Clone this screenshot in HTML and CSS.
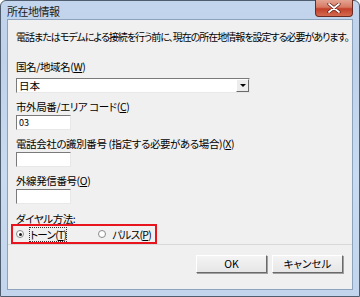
FILE: index.html
```html
<!DOCTYPE html>
<html lang="ja">
<head>
    <meta charset="UTF-8">
    <title>所在地情報</title>
    <link rel="stylesheet" href="styles.css">
</head>
<body>
    <div class="window">
        <div class="titlebar">
            <span class="title">所在地情報</span>
            <span class="close">
                <svg width="14" height="10" viewBox="0 0 14 10">
                    <path d="M2 1 L12 9 M12 1 L2 9" stroke="#5a1a12" stroke-width="3.2" stroke-linecap="round"/>
                    <path d="M2 1 L12 9 M12 1 L2 9" stroke="#ffffff" stroke-width="1.8" stroke-linecap="round"/>
                </svg>
            </span>
        </div>
        <div class="client">
            <div class="content">
                <p class="intro">電話またはモデムによる接続を行う前に、現在の所在地情報を設定する必要があります。</p>

                <label class="label first">国名/地域名(<u>W</u>)</label>
                <div class="combo">
                    <span class="combo-text">日本</span>
                    <span class="combo-btn"><span class="arrow"></span></span>
                </div>

                <label class="label">市外局番/エリア コード(<u>C</u>)</label>
                <div class="field">03</div>

                <label class="label">電話会社の識別番号 (指定する必要がある場合)(<u>X</u>)</label>
                <div class="field"></div>

                <label class="label">外線発信番号(<u>O</u>)</label>
                <div class="field"></div>

                <label class="label dial">ダイヤル方法:</label>
                <div class="highlight">
                    <div class="radio-item">
                        <span class="radio checked"></span>
                        <span class="focus">トーン(<u>T</u>)</span>
                    </div>
                    <div class="radio-item pulse">
                        <span class="radio"></span>
                        <span>パルス(<u>P</u>)</span>
                    </div>
                </div>
            </div>
            <div class="footer">
                <button class="btn default">OK</button>
                <button class="btn">キャンセル</button>
            </div>
        </div>
    </div>
</body>
</html>
```

FILE: styles.css
```css
body {
    margin: 0;
    background: #ffffff;
    font-family: "Noto Sans CJK JP", "Noto Sans", sans-serif;
    font-size: 10.5px;
    color: #000;
    font-feature-settings: "palt";
}
.window {
    width: 360px;
    height: 297px;
    box-sizing: border-box;
    border: 1px solid #4f5d6f;
    border-radius: 6px 6px 0 0;
    background: linear-gradient(180deg, #c3d5ec 0%, #bfd2ea 20%, #c9dbf0 60%, #c2d5ec 100%);
    padding: 0 6px 6px;
    display: flex;
    flex-direction: column;
}
.titlebar {
    height: 21px;
    display: flex;
    align-items: center;
    justify-content: space-between;
}
.title {
    font-size: 11px;
    letter-spacing: -0.5px;
    margin-top: 2px;
    color: #1a1a1a;
}
.close {
    align-self: flex-start;
    width: 38px;
    height: 17px;
    margin-top: -1px;
    box-sizing: border-box;
    border: 1px solid #6b2a22;
    border-top: none;
    border-radius: 0 0 4px 4px;
    background: linear-gradient(180deg, #e4a593 0%, #d77862 45%, #c2402a 55%, #d46a4f 100%);
    display: flex;
    align-items: center;
    justify-content: center;
}
.client {
    flex: 1;
    background: #f0f0f0;
    border: 1px solid #8da2bc;
    display: flex;
    flex-direction: column;
}
.content {
    padding: 10px 8px 0;
    flex: 1;
}
.intro {
    margin: 0;
    font-size: 10px;
    line-height: 14px;
    letter-spacing: -1px;
    white-space: nowrap;
}
.label {
    display: block;
    line-height: 14px;
    margin-top: 7px;
    white-space: nowrap;
    letter-spacing: -0.4px;
}
.label.first {
    margin-top: 16px;
    margin-bottom: 4px;
}
.combo {
    width: 234px;
    height: 15px;
    box-sizing: border-box;
    border: 1px solid;
    border-color: #7a7a7a #e8e8e8 #e8e8e8 #7a7a7a;
    background: #fff;
    display: flex;
    align-items: center;
    justify-content: space-between;
}
.combo-text {
    padding-left: 2px;
    line-height: 13px;
}
.combo-btn {
    width: 13px;
    height: 13px;
    box-sizing: border-box;
    background: #ececec;
    border: 1px solid;
    border-color: #ffffff #6b6b6b #6b6b6b #ffffff;
    display: flex;
    align-items: center;
    justify-content: center;
}
.arrow {
    width: 0;
    height: 0;
    border-left: 3px solid transparent;
    border-right: 3px solid transparent;
    border-top: 3px solid #000;
}
.field {
    width: 55px;
    height: 15px;
    margin-top: 1px;
    box-sizing: border-box;
    border: 1px solid;
    border-color: #7a7a7a #e8e8e8 #e8e8e8 #7a7a7a;
    background: #fff;
    font-size: 9px;
    line-height: 13px;
    padding-left: 2px;
}
.label.dial {
    margin-top: 8px;
}
.highlight {
    width: 146px;
    height: 20px;
    box-sizing: border-box;
    margin: -2px 0 0 -5px;
    border: 2px solid #e8141e;
    display: flex;
    align-items: center;
    padding-left: 3px;
    white-space: nowrap;
    letter-spacing: -0.7px;
}
.radio-item {
    display: flex;
    align-items: center;
    gap: 6px;
    flex-shrink: 0;
}
.radio-item.pulse {
    margin-left: 32px;
}
.radio {
    width: 8px;
    height: 8px;
    box-sizing: border-box;
    border-radius: 50%;
    border: 1px solid #8a8a8a;
    background: #fff;
    display: flex;
    align-items: center;
    justify-content: center;
}
.radio.checked::after {
    content: "";
    width: 3px;
    height: 3px;
    border-radius: 50%;
    background: #1a1a1a;
}
.focus {
    outline: 1px dotted #333;
    line-height: 13px;
}
.footer {
    height: 34px;
    border-top: 1px solid #d8d8d8;
    display: flex;
    justify-content: flex-end;
    align-items: flex-start;
    padding: 10px 9px 0 0;
    gap: 5px;
}
.btn {
    width: 71px;
    height: 18px;
    font-family: inherit;
    font-size: 10.5px;
    font-feature-settings: "palt";
    background: linear-gradient(180deg, #f4f4f4, #e6e6e6);
    border: 1px solid;
    border-color: #ffffff #6a6a6a #6a6a6a #ffffff;
    box-shadow: 1px 1px 0 #a0a0a0;
    padding: 0;
    line-height: 16px;
}
```
